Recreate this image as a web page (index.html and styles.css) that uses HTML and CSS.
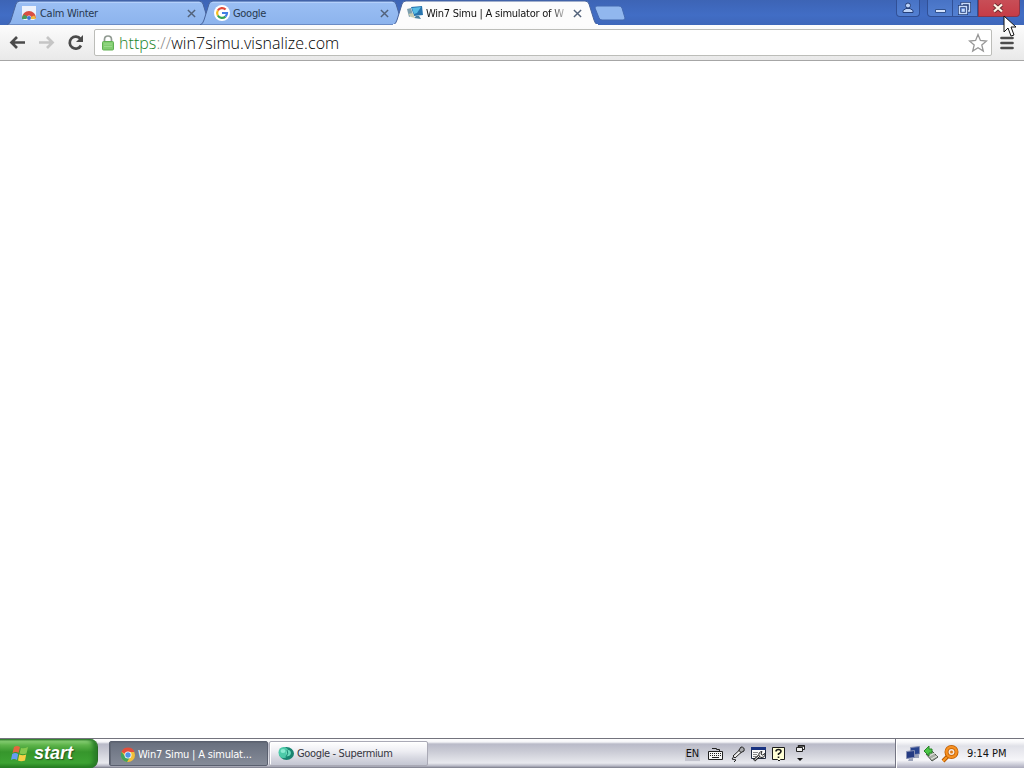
FILE: index.html
```
<!DOCTYPE html>
<html lang="en">
<head>
    <meta charset="UTF-8">
    <title>Win7 Simu | A simulator of Windows 7</title>
    <link rel="stylesheet" href="styles.css">
</head>
<body>
    <div class="desktop">
        <div class="tab-strip">
            <div class="tab">
                <svg class="tab-shape" viewBox="0 0 205 25"><path d="M0 25Q3 24 4 20L9 4Q10 1 13 1H192Q195 1 196 4L201 20Q202 24 205 25Z" fill="url(#tabBlue)" stroke="#47639c"/><path d="M12 2.5H193" stroke="#b4d0fb"/>
                    <defs><linearGradient id="tabBlue" x2="0" y2="1"><stop stop-color="#9bbff4"/><stop offset="1" stop-color="#8cb3ed"/></linearGradient></defs></svg>
                <svg class="icon" viewBox="0 0 16 16"><path d="M1 1H15V13L13 15H3L1 13Z" fill="#edf2fb"/><path d="M1 13A7 7 0 0 1 15 13H10.500A2.500 2.500 0 0 0 5.500 13Z" fill="#d94e43"/><path d="M1 14A6 6 0 0 1 3 9.500L6.500 11.500L5.500 14H1Z" fill="#4a9b5d"/><path d="M15 14A6 6 0 0 0 13 10.500L10 12V14H15Z" fill="#efbd42"/><circle cx="8" cy="13" r="2" fill="#3e76d4"/></svg>
                <span class="tab-title">Calm Winter</span>
                <svg class="tab-close" viewBox="0 0 10 10"><path d="M1 1L9 9M9 1L1 9"/></svg>
            </div>
            <div class="tab">
                <svg class="tab-shape" viewBox="0 0 205 25"><path d="M0 25Q3 24 4 20L9 4Q10 1 13 1H192Q195 1 196 4L201 20Q202 24 205 25Z" fill="url(#tabBlue)" stroke="#47639c"/><path d="M12 2.5H193" stroke="#b4d0fb"/></svg>
                <svg class="icon" viewBox="0 0 16 16"><circle cx="8" cy="8" r="8" fill="#fff"/><g fill="none" stroke-width="2.200"><path d="M3.800 5.500A5 5 0 0 1 11.600 4.500" stroke="#e24a3b"/><path d="M3.800 10.500A5 5 0 0 1 3.800 5.500" stroke="#f4bc1c"/><path d="M11.400 11.600A5 5 0 0 1 3.800 10.500" stroke="#36a457"/><path d="M8 8H13A5 5 0 0 1 11.400 11.600" stroke="#417ee5"/></g></svg>
                <span class="tab-title">Google</span>
                <svg class="tab-close" viewBox="0 0 10 10"><path d="M1 1L9 9M9 1L1 9"/></svg>
            </div>
            <div class="tab active">
                <svg class="tab-shape" viewBox="0 0 205 25"><path d="M0 25Q3 24 4 20L9 4Q10 1 13 1H192Q195 1 196 4L201 20Q202 24 205 25Z" fill="#fcfcfc" stroke="#47639c"/><path d="M0 24.500H205" stroke="#fcfcfc"/></svg>
                <svg class="icon" viewBox="0 0 16 16"><path d="M0 4L4 3L6 10L2 12Z" fill="#7b9eae"/><path d="M4 2L15 1L16 10L7 11Z" fill="#2774ae"/><path d="M5 3L14 2L10 8L7 9Z" fill="#57bce5"/><path d="M9 11H12L14 14L7 13Z" fill="#477f9e"/><path d="M1 9L6 8L8 13L4 12Z" fill="#c8ccb0"/></svg>
                <span class="tab-title page-title">Win7 Simu | A simulator of W</span>
                <svg class="tab-close" viewBox="0 0 10 10"><path d="M1 1L9 9M9 1L1 9"/></svg>
            </div>
            <svg class="new-tab" viewBox="0 0 32 16"><path d="M3 1H25Q27 1 28 3L31 13Q31 15 29 15H8Q6 15 5 13L1 3Q1 1 3 1Z" fill="#91b7ee" stroke="#4368af"/></svg>
            <div class="window-controls">
                <div class="control profile"><svg width="12" height="12" viewBox="0 0 12 12"><path d="M1 10.500V8.500L4 6.500H8L11 8.500V10.500Z" fill="#bdd3f8" stroke="#253f78"/><circle cx="6" cy="3.500" r="2.500" fill="#bdd3f8" stroke="#253f78"/></svg></div>
                <div class="control minimize"><svg width="13" height="13" viewBox="0 0 13 13"><path d="M1.500 7.500H11.500V10.500H1.500Z" fill="#d5e3fd" stroke="#31528f"/></svg></div>
                <div class="control restore"><svg width="13" height="13" viewBox="0 0 13 13"><g fill="none" stroke="#203b75" stroke-width="3"><path d="M4 3V1.500H11.500V9H10M1.500 4.500H8.500V11.500H1.500Z"/></g><g fill="none" stroke="#c8dcfb" stroke-width="1.500"><path d="M4 3V1.500H11.500V9H10M1.500 4.500H8.500V11.500H1.500ZM4.500 7.500H6V9H4.500Z"/></g></svg></div>
                <div class="control close"><svg width="12" height="12" viewBox="0 0 12 12"><path d="M2 2.500L10 9.500M10 2.500L2 9.500" stroke="#6c2b32" stroke-width="4"/><path d="M2 2.500L10 9.500M10 2.500L2 9.500" stroke="#fff4e5" stroke-width="2.300"/></svg></div>
            </div>
        </div>

        <div class="toolbar">
            <svg class="nav" viewBox="0 0 18 18"><path d="M17 8.500H4M9 3L3.500 8.500L9 14" fill="none" stroke="#4b4b4b" stroke-width="2.700"/></svg>
            <svg class="nav" viewBox="0 0 18 18"><path d="M2 8.500H15M10 3L15.500 8.500L10 14" fill="none" stroke="#c5c5c5" stroke-width="2.700"/></svg>
            <svg class="nav" viewBox="0 0 18 18"><path d="M14.500 5A6 6 0 1 0 15 11.500" fill="none" stroke="#4b4b4b" stroke-width="2.700"/><path d="M17 1V8H10Z" fill="#4b4b4b"/></svg>
            <div class="address">
                <svg class="lock" viewBox="0 0 12 16"><path d="M2.500 8V4.500Q2.500 1 6 1T9.500 4.500V8" fill="none" stroke="#909a91" stroke-width="1.700"/><rect x=".5" y="6.500" width="11" height="8.500" rx="1" fill="#82cd70" stroke="#60b052"/><path d="M2 9H10M2 11.500H10" stroke="#9bdb8d"/></svg>
                <span class="url"><span class="secure">https<span class="slashes">://</span></span>win7simu.visnalize.com</span>
                <svg class="star" viewBox="0 0 20 20"><path d="M10 1.500L12.400 7.500L18.500 8L13.800 12L15.300 18L10 14.700L4.700 18L6.200 12L1.500 8L7.600 7.500Z" fill="#fff" stroke="#979797" stroke-width="1.300"/></svg>
            </div>
            <svg class="menu" viewBox="0 0 14 14"><path d="M1.500 2H12.500M1.500 7H12.500M1.500 12H12.500" stroke="#4d4d4d" stroke-width="2.700" stroke-linecap="round"/></svg>
        </div>

        <div class="page"></div>

        <div class="taskbar">
            <div class="start">
                <svg class="windows-logo" viewBox="0 0 18 18"><path d="M3 2Q6 0 9 2L7.500 8Q5 6 1.500 8Z" fill="#e4673f"/><path d="M10 3Q13 4 17 2L15.500 8.500Q12 10 8.500 8.500Z" fill="#86c94f"/><path d="M1.200 9Q4 7 7.200 9L6 15Q3 13 0 15Z" fill="#659df2"/><path d="M8.200 9.500Q12 11 15.200 9.500L14 15.500Q10 17 7 15.500Z" fill="#f5cf45"/></svg>
                <span>start</span>
            </div>
            <div class="task selected">
                <svg class="task-icon" viewBox="0 0 16 16"><circle cx="8" cy="8" r="7" fill="#f2be3a"/><path d="M8 8L1.500 5A7 7 0 0 1 14.500 5H8Z" fill="#e44d3b"/><path d="M1.500 5A7 7 0 0 0 7 15L10 10L5 9Z" fill="#42a35b"/><circle cx="8" cy="8" r="3.500" fill="#fff"/><circle cx="8" cy="8" r="2.700" fill="#5093e6"/></svg>
                <span class="task-one">Win7 Simu | A simulat...</span>
            </div>
            <div class="task">
                <svg class="task-icon" viewBox="0 0 16 16"><ellipse cx="8.500" cy="7.500" rx="7.500" ry="6.500" fill="#198470"/><ellipse cx="5.500" cy="6.500" rx="5" ry="5.500" fill="#4cc9a8"/><path d="M8 4Q12 3 13 7Q12 11 8 10Z" fill="#6bdabb"/><path d="M9 4Q11 7 8 11" fill="none" stroke="#198470"/><ellipse cx="5" cy="5" rx="2.500" ry="2" fill="#8aead1"/></svg>
                <span class="task-two">Google - Supermium</span>
            </div>
            <div class="language-bar">
                <span class="language">EN</span>
                <svg class="keyboard" viewBox="0 0 17 16"><path d="M1.500 5.500H15.500V13.500H1.500Z" fill="#f6f6f6" stroke="#202020"/><path d="M12.500 5V3.500H9.500V2.500H5" fill="none" stroke="#202020"/><path d="M3 7.500H15M3 9.500H15" stroke="#202020" stroke-dasharray="1 1"/><path d="M5 11.500H12" stroke="#202020"/></svg>
                <svg class="microphone" viewBox="0 0 16 16"><path d="M9 4L11 1Q15 1 14 5L10 7Z" fill="#a9aaad" stroke="#222"/><path d="M9 4.500L3 10L5 12L11 6.500Z" fill="#eee" stroke="#222"/><path d="M3.500 11L2 13L6 14L4 16" fill="none" stroke="#222"/></svg>
                <svg class="tools" viewBox="0 0 17 16"><path d="M1.500 1.500H15.500V12.500H1.500Z" fill="#fafafa" stroke="#20283c"/><path d="M1 2.500H16" stroke="#193381" stroke-width="3"/><path d="M3 6.500H8M3 8.500H7M3 10.500H6" stroke="#888"/><path d="M4 14.500L9 10" stroke="#222" stroke-width="3"/><path d="M4.500 14L9 10" stroke="#fff"/><path d="M9 10Q8 6 12 5.500L11 8L12.500 9L15 7.500Q15.500 11.500 11 11.500Z" fill="#eee" stroke="#222"/></svg>
                <svg class="help" viewBox="0 0 15 16"><path d="M1.500 1.500H13.500V13.500H9.500L8 15L6.500 13.500H1.500Z" fill="#ffffd6" stroke="#191919"/><path d="M5 5.500Q5 3.500 7.500 3.500T10 5.500Q10 6.500 7.500 8V9M7.500 10.500V12" fill="none" stroke="#151515" stroke-width="1.600"/></svg>
                <svg class="language-options" viewBox="0 0 12 20"><path d="M3.500 3.500V1.500H9.500V5.500H8M1.500 3.500H7.500V7.500H1.500Z" fill="#eee" stroke="#222"/><path d="M3.500 3.500V2H9.500" fill="none" stroke="#222" stroke-width="1.500"/><path d="M2 14H8L5 17Z" fill="#111"/></svg>
            </div>
            <div class="tray">
                <svg class="network" viewBox="0 0 16 16"><path d="M9 9H14V12H9Z" fill="#9ba2b8"/><path d="M5.500 1.500L14.500 .5V8L5.500 9Z" fill="#29448f" stroke="#8790b3"/><path d="M4 13L8 12V15H3Z" fill="#9ba2b8"/><path d="M1.500 5.500L9.500 4.500V11.500L1.500 12.500Z" fill="#253b82" stroke="#8790b3"/></svg>
                <svg class="safely-remove" viewBox="0 0 16 16"><path d="M3 8L9 5L15 11L9 15Z" fill="#a9aea6" stroke="#4f574e"/><path d="M6 10L12 7M8 13L14 10" stroke="#e7ebe2"/><path d="M1 5L6 0V3H9V7H6V10Z" fill="#4ac545" stroke="#288328"/></svg>
                <svg class="search" viewBox="0 0 18 18"><path d="M7 11L2 16" stroke="#b75800" stroke-width="4"/><path d="M7 11L2 16" stroke="#fa9b27" stroke-width="2"/><circle cx="10.500" cy="7" r="5" fill="#f6e8dc" stroke="#bd5c00" stroke-width="4"/><circle cx="10.500" cy="7" r="5" fill="none" stroke="#f69022" stroke-width="2.400"/><circle cx="10.500" cy="7" r="1.500" fill="#df7b19"/></svg>
                <span class="clock">9:14 PM</span>
            </div>
        </div>
        <!-- Mouse pointer above the window -->
        <svg class="pointer" viewBox="0 0 14 23"><path d="M1 1V17L5 13L8 21L11 20L8 12H13Z" fill="#fff" stroke="#111"/></svg>
    </div>
</body>
</html>
```
FILE: styles.css
```
* {
    margin: 0;
    padding: 0;
    box-sizing: border-box;
}
body {
    overflow: hidden;
    font-family: "DejaVu Sans Condensed", "DejaVu Sans", sans-serif;
    font-size: 11px;
    color: #111;
}
svg {
    display: block;
    flex: none;
}
.desktop {
    display: flex;
    flex-direction: column;
    width: 1024px;
    height: 768px;
    position: relative;
    background: white;
}
.tab-strip {
    display: flex;
    height: 25px;
    padding-left: 7px;
    background: linear-gradient(#3d64b5, #416dc5 60%, #3e67ba);
}
.tab {
    display: flex;
    align-items: center;
    width: 205px;
    height: 25px;
    margin-right: -12px;
    padding: 1px 15px 0 14px;
    position: relative;
    flex: none;
    color: #27384f;
}
.tab > * {
    position: relative;
}
.tab .tab-shape {
    position: absolute;
    left: 0;
    top: 0;
    width: 205px;
    height: 25px;
}
.tab.active {
    color: #111;
}
.icon {
    width: 16px;
    height: 16px;
}
.tab-title {
    width: 138px;
    margin-left: 3px;
    overflow: hidden;
    white-space: nowrap;
    letter-spacing: -0.3px;
}
.page-title {
    letter-spacing: -0.25px;
    -webkit-mask-image: linear-gradient(to right, black 124px, transparent 144px);
}
.tab-close {
    width: 9px;
    height: 9px;
    margin-left: 9px;
    stroke: #52627a;
    stroke-width: 1.6;
}
.new-tab {
    width: 32px;
    height: 16px;
    margin: 5px 0 0 8px;
}
.window-controls {
    display: flex;
    margin: 0 4px 0 auto;
}
.control {
    display: flex;
    align-items: center;
    justify-content: center;
    height: 17px;
    border: 1px solid #315096;
    border-top: none;
    background: linear-gradient(#4873c5, #5380d2);
}
.profile {
    width: 24px;
    margin-right: 7px;
    border-radius: 0 0 4px 4px;
}
.minimize {
    width: 26px;
    border-radius: 0 0 0 4px;
}
.restore {
    width: 25px;
    padding-right: 2px;
    border-left: none;
}
.close {
    width: 42px;
    padding-right: 2px;
    border-color: #8b3549;
    border-radius: 0 0 4px 0;
    background: linear-gradient(#c84e57, #c63c46);
}
.toolbar {
    display: flex;
    align-items: center;
    height: 36px;
    padding: 0 9px 0 8px;
    border-bottom: 1px solid #a6a6a6;
    background: linear-gradient(#fcfcfc, #e9e9e9);
}
.nav {
    width: 18px;
    height: 18px;
    margin-right: 11px;
}
.address {
    display: flex;
    align-items: center;
    width: 898px;
    height: 27px;
    margin-left: -1px;
    padding: 0 3px 0 7px;
    border: 1px solid #bcbdb9;
    border-radius: 2px;
    background: white;
}
.lock {
    width: 12px;
    height: 16px;
}
.url {
    margin-left: 5px;
    font-family: "Open Sans", sans-serif;
    font-size: 16px;
    font-weight: 300;
    line-height: 24px;
    letter-spacing: 0.05px;
    color: #000;
}
.secure {
    color: #21842a;
}
.slashes {
    color: #858585;
}
.star {
    width: 20px;
    height: 20px;
    margin-left: auto;
}
.menu {
    width: 14px;
    height: 14px;
    margin-left: 8px;
}
.page {
    flex: 1;
}
.taskbar {
    display: flex;
    height: 30px;
    border-top: 1px solid #73737d;
    background: linear-gradient(#fff 0, #f5f5f8 3px, #b9bac8 5px, #c9cad4 12px, #e8e9ee 24px, #b6b7c4 27px, #777986 29px);
}
.start {
    display: flex;
    align-items: center;
    width: 98px;
    margin-right: 11px;
    padding-left: 11px;
    border-right: 1px solid #276b23;
    border-radius: 0 8px 8px 0;
    background: linear-gradient(#246f20, #8ed47a 2px, #5eb44b 6px, #36962c 13px, #3da333 24px, #237b20 29px);
    box-shadow: inset -4px 0 4px #287d26;
    color: white;
    font: italic bold 18px "Liberation Sans", sans-serif;
    text-shadow: 1px 1px 1px #28551f;
}
.windows-logo {
    width: 18px;
    height: 18px;
    margin-right: 5px;
}
.task {
    display: flex;
    align-items: center;
    width: 159px;
    height: 25px;
    margin: 2px 1px 0 0;
    padding-left: 8px;
    border: 1px solid #aaaab6;
    border-radius: 2px;
    background: linear-gradient(#fff, #eeeef3 9px, #d7d8e1 16px, #c4c6d2);
    box-shadow: inset 1px 1px white;
    color: #353540;
}
.selected {
    padding: 2px 0 0 10px;
    border-color: #5a606f;
    background: linear-gradient(#686f7e, #858b98);
    box-shadow: inset 1px 1px #626875;
    color: white;
}
.task-icon {
    width: 16px;
    height: 16px;
}
.task span {
    margin-left: 3px;
    white-space: nowrap;
}
.task .task-one {
    margin-left: 2px;
    letter-spacing: -0.2px;
}
.task-two {
    letter-spacing: -0.35px;
}
.language-bar {
    display: flex;
    align-items: center;
    margin-left: auto;
    margin-right: 88px;
}
.language {
    padding: 1px 1px;
    margin-right: 7px;
    background: #c2c3cd;
    letter-spacing: -0.2px;
}
.keyboard {
    width: 17px;
    height: 16px;
    margin-right: 6px;
}
.microphone {
    width: 16px;
    height: 16px;
    margin-right: 4px;
}
.tools {
    width: 17px;
    height: 16px;
    margin-right: 4px;
}
.help {
    width: 15px;
    height: 16px;
    margin-right: 9px;
}
.language-options {
    width: 12px;
    height: 20px;
}
.tray {
    display: flex;
    align-items: center;
    width: 129px;
    padding-left: 9px;
    border-left: 1px solid #747583;
    background: linear-gradient(#fff 0, #f8f8fa 3px, #e0e1e8 7px, #f6f6f9 21px, #d0d1dc 25px, #aaaabb 29px);
    box-shadow: inset 1px 0 white;
}
.network {
    width: 16px;
    height: 16px;
    margin-right: 2px;
}
.safely-remove {
    width: 16px;
    height: 16px;
    margin-right: 2px;
}
.search {
    width: 18px;
    height: 18px;
    margin-right: 8px;
}
.clock {
    letter-spacing: -0.05px;
    white-space: nowrap;
}
.pointer {
    position: absolute;
    left: 1003px;
    top: 15px;
    width: 14px;
    height: 23px;
}
```
